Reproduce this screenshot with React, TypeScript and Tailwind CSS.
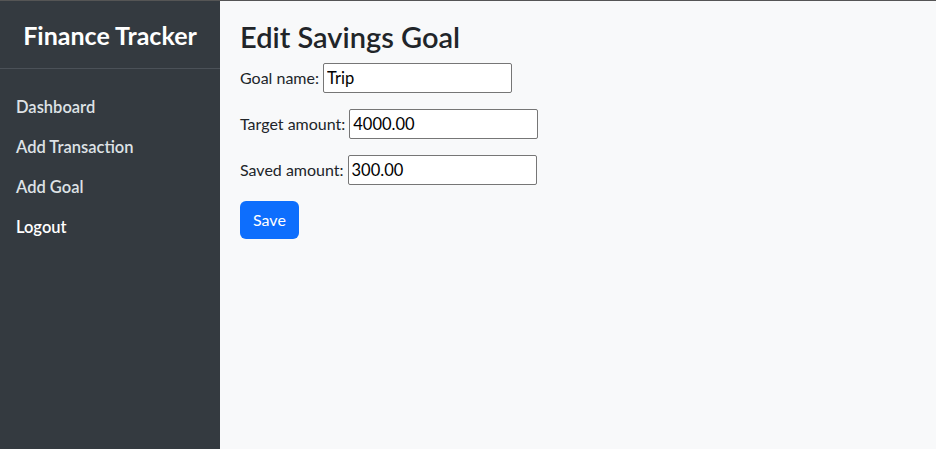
import React from "react";

export default function App() {
  const font = { fontFamily: '"Segoe UI", Lato, "Liberation Sans", sans-serif' };
  const inputCls =
    "w-[189px] h-[30px] border border-[#767676] rounded-[2px] bg-white px-[3px] text-[16.5px] text-black";
  return (
    <div className="flex h-[449px] w-[936px] border-t border-[#555]" style={font}>
      <aside className="w-[220px] shrink-0 bg-[#343a40] flex flex-col">
        <div className="h-[68px] flex items-center justify-center border-b border-[#4b5158] pt-[2px]">
          <h1 className="text-[25px] font-bold text-white leading-none">Finance Tracker</h1>
        </div>
        <nav className="flex flex-col px-4 pt-[26px] gap-[16px]">
          <a className="text-[16.5px] font-semibold text-[#dee2e6] leading-[24px]">Dashboard</a>
          <a className="text-[16.5px] font-semibold text-[#dee2e6] leading-[24px]">Add Transaction</a>
          <a className="text-[16.5px] font-semibold text-[#dee2e6] leading-[24px]">Add Goal</a>
          <a className="text-[16.5px] font-semibold text-white leading-[24px]">Logout</a>
        </nav>
      </aside>
      <main className="flex-1 bg-[#f8f9fa] px-5 pt-[19px] text-[#212529]">
        <h2 className="text-[29px] font-semibold leading-[34px] mb-[9px]">Edit Savings Goal</h2>
        <form className="flex flex-col gap-[16px]" onSubmit={(e) => e.preventDefault()}>
          <label className="flex items-center gap-1 text-[16px]">
            Goal name:
            <input defaultValue="Trip" className={inputCls} />
          </label>
          <label className="flex items-center gap-1 text-[16px]">
            Target amount:
            <input defaultValue="4000.00" className={inputCls} />
          </label>
          <label className="flex items-center gap-1 text-[16px]">
            Saved amount:
            <input defaultValue="300.00" className={inputCls} />
          </label>
          <div>
            <button type="submit" className="h-[38px] px-[13px] rounded-[6px] bg-[#0d6efd] text-white text-[16px]">
              Save
            </button>
          </div>
        </form>
      </main>
    </div>
  );
}
